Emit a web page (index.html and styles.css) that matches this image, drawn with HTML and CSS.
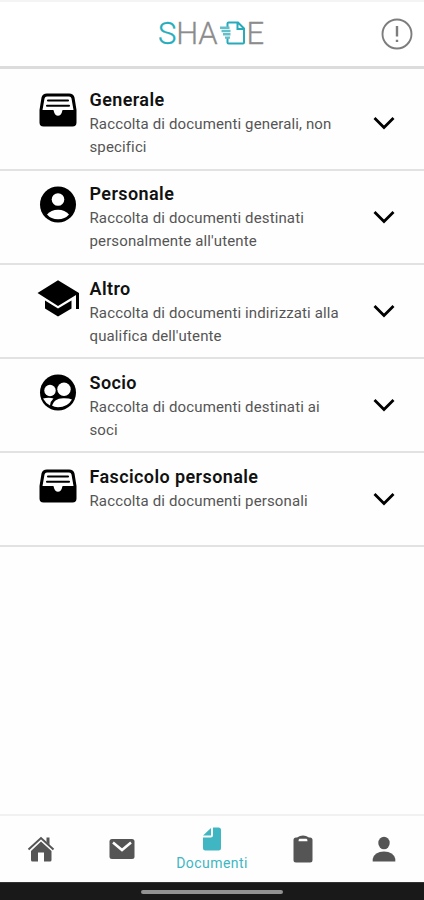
FILE: index.html
```html
<!DOCTYPE html>
<html lang="it">
<head>
<meta charset="utf-8">
<meta name="viewport" content="width=device-width, initial-scale=1">
<title>Documenti</title>
<link rel="stylesheet" href="styles.css">
</head>
<body>
<svg class="defs" aria-hidden="true">
  <symbol id="tray" viewBox="0 0 40 36">
    <path fill-rule="evenodd" d="M9 .500H31Q35.500 .500 36.500 4.500L38.500 17V29.500Q38.500 33.500 34.500 33.500H5.500Q1.500 33.500 1.500 29.500V17L3.500 4.500Q4.500 .500 9 .500ZM9 3.500Q7 3.500 6.500 5.500L4.500 17H15Q16 17 16 19Q17 22.700 20 22.700Q23 22.700 24 19Q24 17 25 17H35.500L33.500 5.500Q33 3.500 31 3.500Z"/>
    <path class="line" d="M10 7.500H30M9 12.700H31"/>
  </symbol>
  <symbol id="chevron" viewBox="0 0 24 16"><path class="chevron-line" d="M2.500 3 12 12.500 21.500 3"/></symbol>
</svg>
<div class="app">
  <header class="header">
    <div class="logo"><span class="accent">S</span><span>HA</span>
      <svg class="logo-doc" viewBox="0 0 27 25"><path d="M8.500 6V2.500Q8.500 1.500 9.500 1.500H19L25 7.500V21.500Q25 22.500 24 22.500H9.500Q8.500 22.500 8.500 21.500V17M18.500 1.500V8H25"/><path class="hand" d="M1 6.700H10.500M2.500 10H11.500M4 13.300H11.500M6 16.600H11"/></svg>
      <span>E</span></div>
    <svg class="alert" viewBox="0 0 32 32"><circle cx="16" cy="16" r="14.500"/><path class="mark" d="M16 8V18.500M16 21.700V24"/></svg>
  </header>
  <main class="list">
    <section class="item">
      <svg class="icon"><use href="#tray"/></svg>
      <div class="text"><h2>Generale</h2><p>Raccolta di documenti generali, non<br>specifici</p></div>
      <svg class="chevron"><use href="#chevron"/></svg>
    </section>
    <section class="item">
      <svg class="icon" viewBox="0 0 40 36"><circle cx="20" cy="17.500" r="18"/><circle class="cut" cx="20" cy="12.500" r="6.300"/><path class="cut" d="M9 27.500Q13 22.800 20 22.800T31 27.500Q27 32.300 20 32.300T9 27.500Z"/></svg>
      <div class="text"><h2>Personale</h2><p>Raccolta di documenti destinati<br>personalmente all'utente</p></div>
      <svg class="chevron"><use href="#chevron"/></svg>
    </section>
    <section class="item">
      <svg class="icon" viewBox="0 0 40 36"><path d="M-.500 12 20-.700 41 12V28H38V14L20 25ZM7 19.500 20 27.500 33.500 19.500V27.500L20 35.500 7 27.500Z"/></svg>
      <div class="text"><h2>Altro</h2><p>Raccolta di documenti indirizzati alla<br>qualifica dell'utente</p></div>
      <svg class="chevron"><use href="#chevron"/></svg>
    </section>
    <section class="item">
      <svg class="icon" viewBox="0 0 40 36"><circle cx="20" cy="17.500" r="18"/><circle class="cut" cx="12" cy="15.500" r="5.700"/><circle class="cut" cx="26" cy="14.200" r="6.700"/><path class="cut" d="M5 23.500Q11 22 15.500 23.500Q12.500 26 12 30.500Q7.500 28 5 23.500ZM14 30.500Q16 23.500 25 23.200Q31 23 34 24.500Q29.500 32.300 20 32.300Q16 32.300 14 30.500Z"/></svg>
      <div class="text"><h2>Socio</h2><p>Raccolta di documenti destinati ai<br>soci</p></div>
      <svg class="chevron"><use href="#chevron"/></svg>
    </section>
    <section class="item">
      <svg class="icon"><use href="#tray"/></svg>
      <div class="text"><h2>Fascicolo personale</h2><p>Raccolta di documenti personali</p></div>
      <svg class="chevron"><use href="#chevron"/></svg>
    </section>
  </main>
  <nav class="nav">
    <a class="tab"><svg class="nav-icon" viewBox="0 0 28 28"><path d="M14 6.500 24.500 16V25Q24.500 26.500 23 26.500H17V17.500H11V26.500H5.500Q4 26.500 4 25V16Z"/><path d="M19.500 2.500H22.500V10L19.500 7Z"/><path class="roof" d="M1.500 14.500 14 3 26.500 14.500"/></svg></a>
    <a class="tab"><svg class="nav-icon" viewBox="0 0 28 28"><rect x="1.500" y="4" width="25" height="20" rx="2.500"/><path class="flap" d="M5 7.500 14 15 23 7.500"/></svg></a>
    <a class="tab active"><svg class="doc-icon" viewBox="0 0 20 24"><path d="M11 .500H16.500Q19 .500 19 3V21Q19 23.500 16.500 23.500H3.500Q1 23.500 1 21V10.500H8.500Q11 10.500 11 8ZM9 1V8.500H1Z"/></svg><span>Documenti</span></a>
    <a class="tab"><svg class="nav-icon" viewBox="0 0 28 28"><path fill-rule="evenodd" d="M8 2.500Q14-1.500 20 2.500H21Q23.500 2.500 23.500 5V25Q23.500 27.500 21 27.500H7Q4.500 27.500 4.500 25V5Q4.500 2.500 7 2.500ZM10.500 3.700Q9.500 4 9.500 6.200H18.500Q18.500 4 17.500 3.700Z"/></svg></a>
    <a class="tab"><svg class="nav-icon" viewBox="0 0 28 28"><ellipse cx="14" cy="8" rx="5.700" ry="6.300"/><path d="M2.700 26.500V24Q4.500 16.500 14 16.500T25.300 24V26.500Z"/></svg></a>
  </nav>
  <footer class="system"><div class="handle"></div></footer>
</div>
</body>
</html>
```

FILE: styles.css
```css
* { box-sizing: border-box; }
body { margin: 0; background: #fefefe; color: #111; font-family: Roboto, sans-serif; }
.defs { position: absolute; width: 0; height: 0; }
.app { height: 900px; display: flex; flex-direction: column; overflow: hidden; }
.header { height: 69px; flex: none; display: grid; grid-template-columns: 1fr 33px; align-items: center; padding: 2px 10px 3px 0; border-top: 2px solid #f4f4f4; border-bottom: 3px solid #dcdcdc; background: #fff; }
.logo { display: flex; align-items: center; margin-left: 158px; height: 32px; color: #8c8c8c; font-size: 31px; font-weight: 300; line-height: 32px; letter-spacing: -.2px; -webkit-text-stroke: .3px currentColor; }
.logo .accent { color: #23adbd; }
.logo-doc { width: 27px; height: 25px; margin-left: 2px; fill: none; stroke: #27aaba; stroke-width: 2; }
.logo-doc .hand { stroke: #64bfc8; stroke-width: 2.4; }
.alert { width: 32px; height: 32px; fill: none; stroke: #7d7d7d; stroke-width: 1.9; }
.alert .mark { stroke-width: 2.4; }
.list { flex: 1; padding-top: 8px; }
.item { display: grid; grid-template-columns: 40px 270px 24px; column-gap: 12px; height: 94.1px; padding: 12.4px 0 0 37.5px; border-bottom: 2px solid #e2e2e2; }
.icon { width: 40px; height: 36px; margin-top: 3.2px; overflow: visible; }
.cut { fill: #fff; }
.line { fill: none; stroke: #000; stroke-width: 2.1; stroke-linecap: round; }
.text { white-space: nowrap; }
h2 { margin: 0; font-size: 18px; font-weight: 600; line-height: 22px; letter-spacing: .4px; }
p { margin: 2px 0 0; color: #555; font-size: 15px; line-height: 23px; letter-spacing: .13px; }
.chevron { width: 24px; height: 16px; margin: 25.3px 0 0 .5px; }
.chevron-line { fill: none; stroke: #000; stroke-width: 2.8; }
.nav { height: 68px; flex: none; border-top: 2px solid #f1f1f1; display: grid; grid-template-columns: 81px 81px 100px 82px 80px; align-items: center; }
.tab { display: flex; flex-direction: column; align-items: center; color: #555; }
.nav-icon { width: 28px; height: 28px; fill: currentColor; }
.roof, .flap { fill: none; stroke: #555; stroke-width: 2; }
.flap { stroke: #fff; stroke-width: 2.5; }
.active { color: #40b6c2; font-size: 14px; line-height: 18px; letter-spacing: .45px; }
.doc-icon { width: 20px; height: 24px; margin-bottom: 3px; fill: currentColor; }
.system { height: 18px; flex: none; background: #191919; border-top: 1px solid #333; display: flex; justify-content: center; align-items: center; }
.handle { width: 142px; height: 4px; border-radius: 2px; background: #929292; }
```
